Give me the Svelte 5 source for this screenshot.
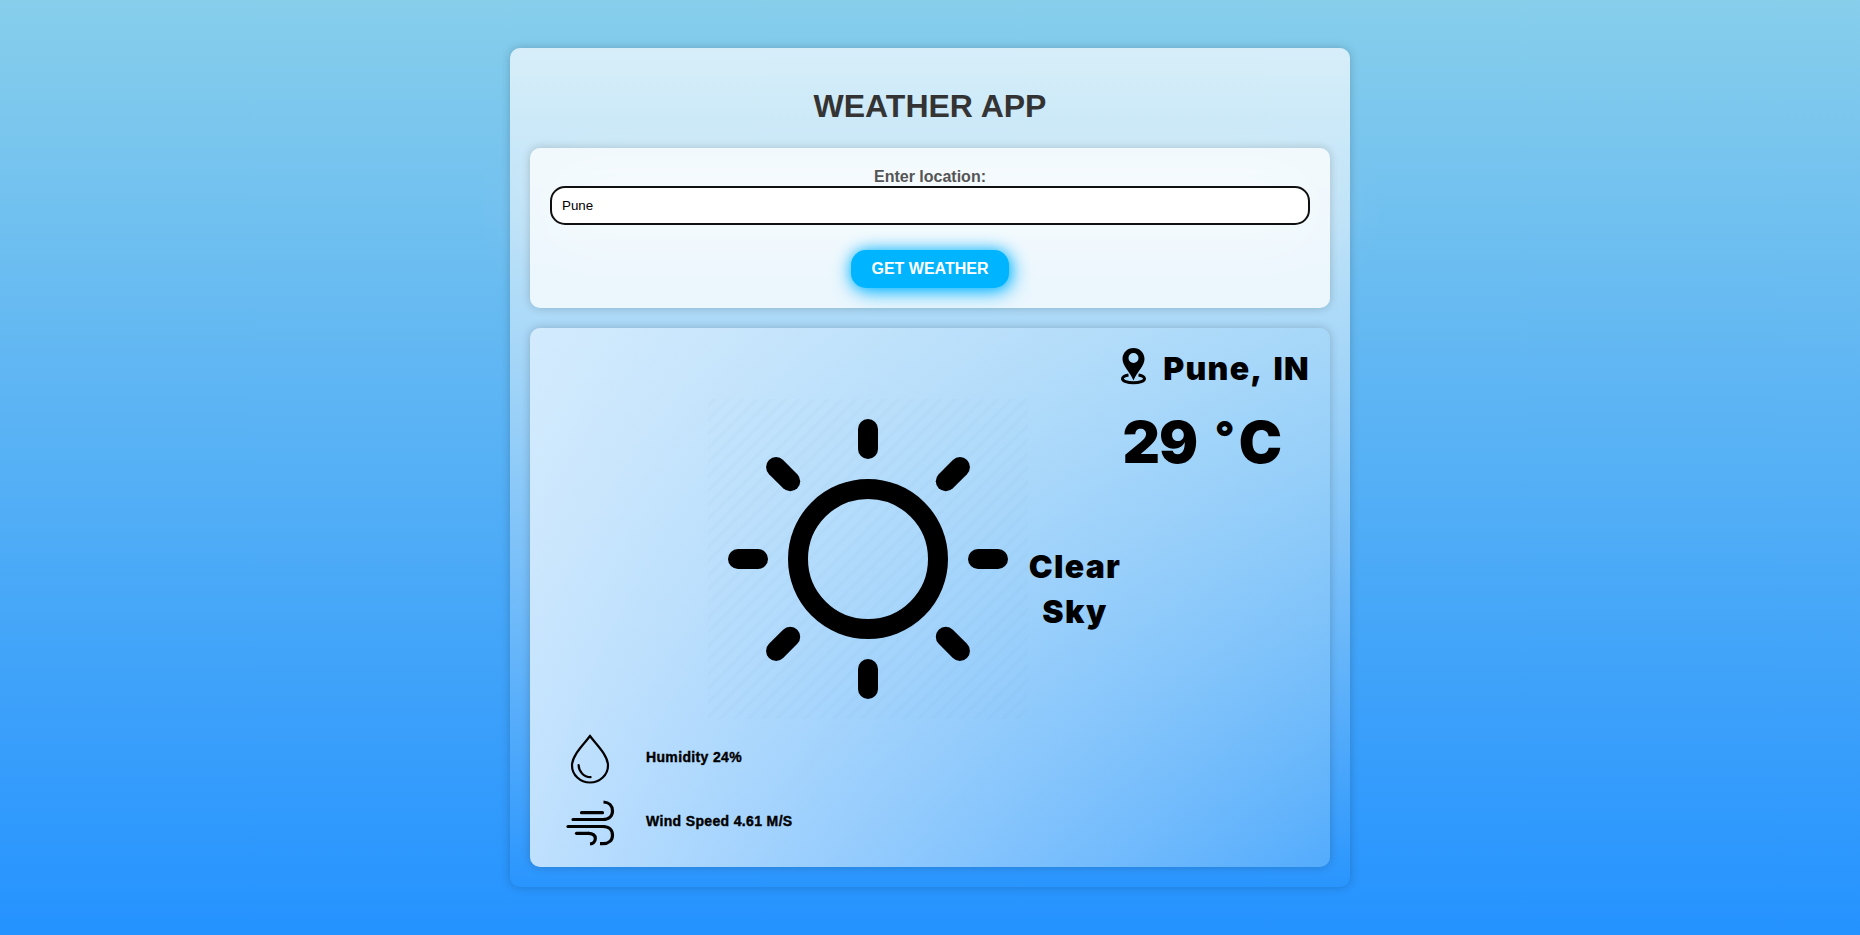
<script>
  let city = $state('Pune');
  const rays = [0, 45, 90, 135, 180, 225, 270, 315];
</script>

<main>
  <section class="app">
    <h1>WEATHER APP</h1>
    <form class="search" onsubmit={(e) => e.preventDefault()}>
      <label for="city">Enter location:</label>
      <input id="city" type="text" bind:value={city} />
      <button type="submit">GET WEATHER</button>
    </form>

    <div class="report">
      <div class="place">
        <svg width="26" height="37" viewBox="0 0 26 37">
          <path fill-rule="evenodd" d="M12.5 0C6.3 0 1.5 4.9 1.5 11c0 6.700 7.200 12.500 11 21.600C16.300 23.500 23.500 17.700 23.500 11 23.500 4.900 18.700 0 12.500 0Zm0 5a5 5 0 1 1 0 10 5 5 0 0 1 0-10Z" />
          <path d="M7.500 27C3.700 27.700 1.500 29 1.500 30.700c0 2.300 4.800 4 11 4s11-1.700 11-4c0-1.700-2.200-3-6-3.700" fill="none" stroke="#000" stroke-width="3" />
        </svg>
        <span>Pune, IN</span>
      </div>
      <div class="temp">29 <span class="degree">°</span>C</div>
      <div class="condition">
        <svg class="sun" width="320" height="320" viewBox="-160 -160 320 320">
          <circle r="70" fill="none" stroke="#000" stroke-width="20" />
          {#each rays as angle}
            <rect x="-10" y="-140" width="20" height="40" rx="10" transform="rotate({angle})" />
          {/each}
        </svg>
        <p>Clear<br />Sky</p>
      </div>
      <div class="details">
        <div class="detail">
          <svg width="50" height="50" viewBox="0 0 50 50" fill="none" stroke="#000" stroke-width="2.2" stroke-linecap="round">
            <path d="M25 2C19.500 9.500 7 21 7 31.500a18 17 0 0 0 36 0C43 21 30.500 9.500 25 2Z" />
            <path d="M13.600 31c.2 6.500 5 12 12 12.200" />
          </svg>
          <span>Humidity 24%</span>
        </div>
        <div class="detail">
          <svg width="50" height="50" viewBox="0 0 50 50" fill="none" stroke="#000" stroke-width="3.2">
            <path d="M16.500 14.700H37.500M8 21.500H39" stroke-linecap="round" />
            <path d="M38 21.500c6 0 9.500-3.500 9.500-8.500s-3.500-8.700-9-9" />
            <path d="M3 28.500H39" stroke-linecap="round" />
            <path d="M38 28.500c6 0 9.500 3.500 9.500 8.700s-4 8.500-9.500 8.500h-3" />
            <path d="M11.500 35.300H24" stroke-linecap="round" />
            <path d="M23 35.300c5 0 7.300 2 7.300 5.200s-2.300 5.300-5.300 5.500" />
          </svg>
          <span>Wind Speed 4.61 M/S</span>
        </div>
      </div>
    </div>
  </section>
</main>

<style>
  :global(body) {
    margin: 0;
    font-family: 'Liberation Sans', Arial, sans-serif;
  }
  main {
    height: 935px;
    display: flex;
    align-items: center;
    justify-content: center;
    background: linear-gradient(to bottom, #87ceeb, #2492ff);
  }
  .app {
    box-sizing: border-box;
    width: 840px;
    height: 839px;
    padding: 20px;
    border-radius: 10px;
    background: linear-gradient(to bottom, rgba(255, 255, 255, 0.68), rgba(255, 255, 255, 0));
    box-shadow: 0 0 10px rgba(0, 0, 0, 0.2);
  }
  h1 {
    margin: 20px 0 23px;
    height: 37px;
    line-height: 37px;
    font-size: 32px;
    text-align: center;
    color: #333;
  }
  .search {
    box-sizing: border-box;
    height: 160px;
    padding: 20px;
    display: flex;
    flex-direction: column;
    align-items: center;
    border-radius: 10px;
    background: rgba(255, 255, 255, 0.75);
    box-shadow: 0 0 10px rgba(0, 0, 0, 0.2);
  }
  label {
    position: relative;
    z-index: 1;
    height: 18px;
    line-height: 18px;
    font-size: 16px;
    font-weight: bold;
    color: #555;
  }
  input {
    box-sizing: border-box;
    width: 100%;
    height: 39px;
    padding: 0 10px;
    border: 2px solid #101010;
    border-radius: 15px;
    background: #fff;
    font: 13.333px 'Liberation Sans', Arial, sans-serif;
    color: #000;
    outline: none;
    box-shadow: 0 0 70px rgba(255, 255, 255, 0.8);
  }
  button {
    width: 158px;
    height: 38px;
    margin-top: 25px;
    padding: 0;
    border: 0;
    border-radius: 15px;
    background: #00b4ff;
    color: #fff;
    font: bold 16px 'Liberation Sans', Arial, sans-serif;
    box-shadow: 2px 3px 20px #00b4ff, 0 0 12px rgba(0, 180, 255, 0.5);
  }
  .report {
    box-sizing: border-box;
    height: 539px;
    margin-top: 20px;
    padding: 20px;
    border-radius: 10px;
    background: linear-gradient(to right, rgba(219, 238, 254, 0.84), rgba(160, 213, 250, 0.32));
    box-shadow: 0 0 10px rgba(0, 0, 0, 0.2);
    color: #000;
    font-family: Inter, 'Arial Black', sans-serif;
    font-weight: 900;
  }
  .place {
    height: 40px;
    display: flex;
    justify-content: flex-end;
    font-size: 32px;
    line-height: 41px;
    letter-spacing: 1.3px;
    word-spacing: 4px;
  }
  .place svg {
    margin-right: 16px;
  }
  .temp {
    margin: 19px 29px 0 0;
    height: 70px;
    line-height: 70px;
    font-size: 58px;
    letter-spacing: -1px;
    word-spacing: 7px;
    text-align: right;
    white-space: nowrap;
  }
  .degree {
    margin-right: 5px;
    font-size: 43px;
    line-height: 0;
    vertical-align: 11px;
  }
  .condition {
    height: 320px;
    margin-top: -78px;
    padding-left: 158px;
    display: flex;
    align-items: center;
  }
  .sun {
    background: repeating-linear-gradient(-45deg, transparent 0 5px, rgba(60, 110, 150, 0.028) 7px 9px, transparent 10px);
  }
  .condition p {
    width: 96px;
    margin: 60px 0 0 -1px;
    font-size: 32px;
    line-height: 45px;
    letter-spacing: 1.3px;
    text-align: center;
  }
  .details {
    margin: 15px 0 0 15px;
  }
  .detail {
    height: 50px;
    margin-bottom: 14px;
    display: flex;
    align-items: center;
    gap: 31px;
    font: bold 14px 'Liberation Sans', Arial, sans-serif;
    letter-spacing: 0.35px;
  }
  .detail span {
    margin-top: -5px;
    -webkit-text-stroke: 0.4px #000;
  }
</style>
